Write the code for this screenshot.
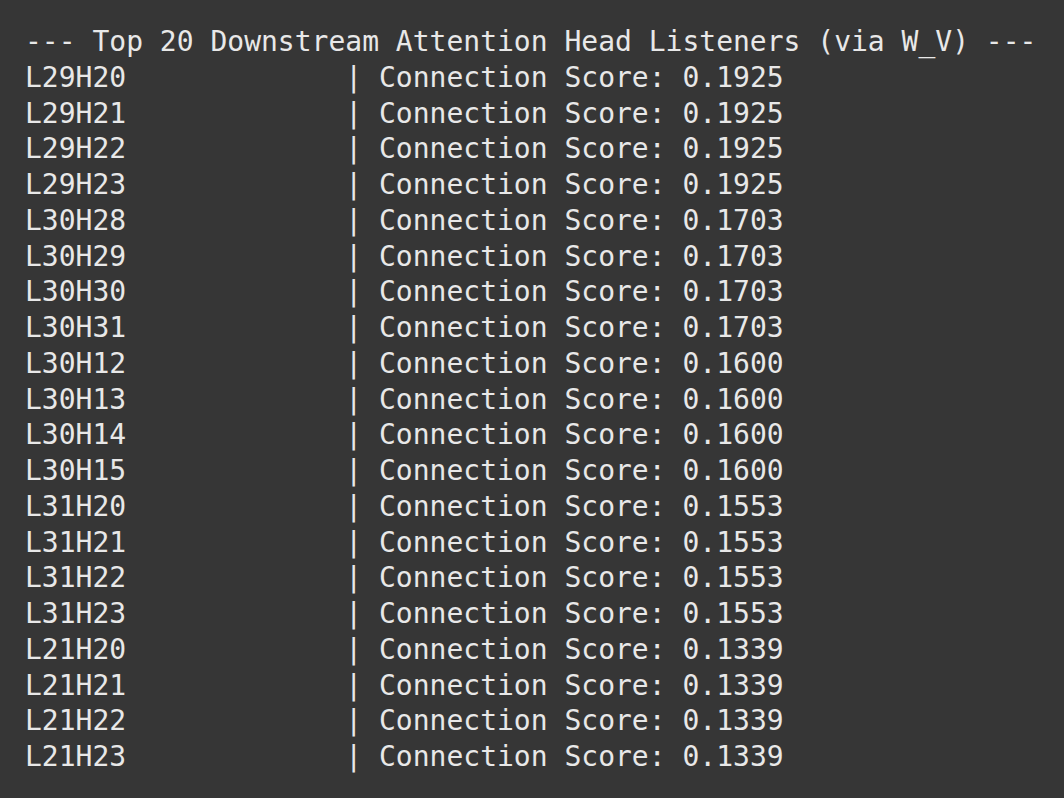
import React from "react";

const rows = [
  ["L29H20", "0.1925"],
  ["L29H21", "0.1925"],
  ["L29H22", "0.1925"],
  ["L29H23", "0.1925"],
  ["L30H28", "0.1703"],
  ["L30H29", "0.1703"],
  ["L30H30", "0.1703"],
  ["L30H31", "0.1703"],
  ["L30H12", "0.1600"],
  ["L30H13", "0.1600"],
  ["L30H14", "0.1600"],
  ["L30H15", "0.1600"],
  ["L31H20", "0.1553"],
  ["L31H21", "0.1553"],
  ["L31H22", "0.1553"],
  ["L31H23", "0.1553"],
  ["L21H20", "0.1339"],
  ["L21H21", "0.1339"],
  ["L21H22", "0.1339"],
  ["L21H23", "0.1339"],
];

const App = () => {
  return (
    <div className="w-[1064px] h-[798px] bg-[#363636] text-[#e8e8e8] pl-[25px] pt-[24px] font-['DejaVu_Sans_Mono','Liberation_Mono',monospace] text-[28px] leading-[35.75px] whitespace-pre overflow-hidden">
      <div>--- Top 20 Downstream Attention Head Listeners (via W_V) ---</div>
      {rows.map(([head, score]) => (
        <div key={head}>
          {head.padEnd(19, " ")}| Connection Score: {score}
        </div>
      ))}
    </div>
  );
};

export default App;
